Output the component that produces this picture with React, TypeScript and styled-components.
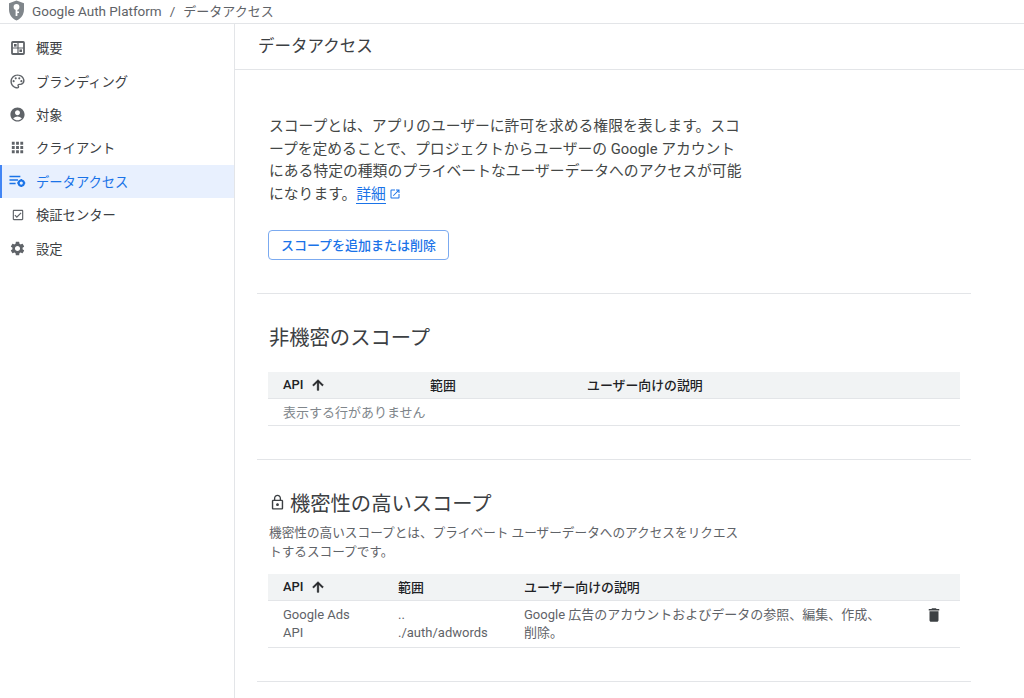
import React from "react";
import styled, { createGlobalStyle } from "styled-components";
import {
  MdAccountCircle,
  MdApps,
  MdArrowUpward,
  MdDelete,
  MdLockOutline,
  MdOpenInNew,
  MdOutlineCheckBox,
  MdOutlinePalette,
  MdSettings,
} from "react-icons/md";

const GlobalStyle = createGlobalStyle`
  html, body {
    margin: 0;
    padding: 0;
    height: 698px;
    overflow: hidden;
    background: #fff;
    font-family: Roboto, "Noto Sans CJK JP", sans-serif;
    color: #444746;
  }
  * { box-sizing: border-box; }
`;

const ShieldLogo = () => (
  <svg width="17" height="21" viewBox="0 0 17 21">
    <path d="M8.5 0.5 L16 3.2 V9.5 C16 14.6 13 18.6 8.5 20.5 C4 18.6 1 14.6 1 9.5 V3.2 Z" fill="#80868b" />
    <circle cx="8.5" cy="7" r="2.9" fill="#fff" />
    <path d="M7.6 9 H9.4 V16 H7.6 Z M9.4 11.6 H11 V13 H9.4 Z" fill="#fff" />
  </svg>
);

const OverviewIcon = () => (
  <svg width="14" height="14" viewBox="0 0 14 14" fill="none" stroke="#5f6368" strokeWidth="1.8">
    <rect x="1" y="1" width="12" height="12" rx="0.8" />
    <path d="M7 1.5 V12.5 M1.5 7 H12.5" strokeWidth="1.2" />
    <rect x="3" y="3" width="2.6" height="2.6" fill="#5f6368" stroke="none" />
    <rect x="8.4" y="8.4" width="2.6" height="2.6" fill="#5f6368" stroke="none" />
  </svg>
);

const DataAccessIcon = () => (
  <svg width="18" height="14" viewBox="0 0 18 14">
    <path d="M0.5 1.5 H12 V3 H0.5 Z M0.5 5.2 H9.5 V6.7 H0.5 Z M0.5 8.9 H7 V10.4 H0.5 Z" fill="#1a73e8" />
    <circle cx="13" cy="9.2" r="2.8" fill="none" stroke="#1a73e8" strokeWidth="2.2" />
    <path d="M13 5 V6.2 M13 12.2 V13.4 M8.8 9.2 H10 M16 9.2 H17.2" stroke="#1a73e8" strokeWidth="1.6" />
  </svg>
);

const navItems = [
  { label: "概要", icon: <OverviewIcon /> },
  { label: "ブランディング", icon: <MdOutlinePalette size={17} /> },
  { label: "対象", icon: <MdAccountCircle size={17} /> },
  { label: "クライアント", icon: <MdApps size={19} /> },
  { label: "データアクセス", icon: <DataAccessIcon />, active: true },
  { label: "検証センター", icon: <MdOutlineCheckBox size={14} /> },
  { label: "設定", icon: <MdSettings size={17} /> },
];

const App: React.FC = () => {
  return (
    <Page>
      <GlobalStyle />
      <TopBar>
        <ShieldLogo />
        <Product>Google Auth Platform</Product>
        <Slash>/</Slash>
        <Crumb>データアクセス</Crumb>
      </TopBar>
      <Body>
        <Sidebar>
          {navItems.map((item) => (
            <NavItem key={item.label} $active={!!item.active}>
              <NavIcon>{item.icon}</NavIcon>
              {item.label}
            </NavItem>
          ))}
        </Sidebar>
        <Main>
          <PageTitle>データアクセス</PageTitle>
          <Content>
            <Intro>
              スコープとは、アプリのユーザーに許可を求める権限を表します。スコープを定めることで、プロジェクトからユーザーの Google アカウントにある特定の種類のプライベートなユーザーデータへのアクセスが可能になります。
              <LearnMore>詳細</LearnMore>
              <ExternalIcon><MdOpenInNew size={12} /></ExternalIcon>
            </Intro>
            <OutlineButton>スコープを追加または削除</OutlineButton>
            <Divider $top={33} />

            <SectionTitle $top={29}>非機密のスコープ</SectionTitle>
            <Table $top={23}>
              <HeadRow $cols="147px 157px 1fr">
                <HeadCell>API <SortIcon><MdArrowUpward size={16} /></SortIcon></HeadCell>
                <HeadCell>範囲</HeadCell>
                <HeadCell>ユーザー向けの説明</HeadCell>
              </HeadRow>
              <EmptyRow>表示する行がありません</EmptyRow>
            </Table>
            <Divider $top={33} />

            <SectionTitle $top={29}>
              <LockIcon><MdLockOutline size={17} /></LockIcon>
              機密性の高いスコープ
            </SectionTitle>
            <SectionText>
              機密性の高いスコープとは、プライベート ユーザーデータへのアクセスをリクエストするスコープです。
            </SectionText>
            <Table $top={13}>
              <HeadRow $cols="115px 126px 403px 1fr">
                <HeadCell>API <SortIcon><MdArrowUpward size={16} /></SortIcon></HeadCell>
                <HeadCell>範囲</HeadCell>
                <HeadCell>ユーザー向けの説明</HeadCell>
                <span />
              </HeadRow>
              <DataRow $cols="115px 126px 403px 1fr">
                <DataCell>Google Ads API</DataCell>
                <DataCell>.. ./auth/adwords</DataCell>
                <DataCell>Google 広告のアカウントおよびデータの参照、編集、作成、削除。</DataCell>
                <TrashCell><MdDelete size={18} /></TrashCell>
              </DataRow>
            </Table>
            <Divider $top={33} />
          </Content>
        </Main>
      </Body>
    </Page>
  );
};

export default App;

const Page = styled.div`
  width: 1024px;
  height: 698px;
  display: flex;
  flex-direction: column;
  overflow: hidden;
`;

const TopBar = styled.header`
  height: 24px;
  flex-shrink: 0;
  display: flex;
  align-items: center;
  padding: 0 0 2px 8px;
  border-bottom: 1px solid #e3e5e8;
  font-size: 13.5px;
  color: #5f6368;
`;

const Product = styled.span`
  margin-left: 7px;
`;

const Slash = styled.span`
  margin: 0 8px;
`;

const Crumb = styled.span`
  font-size: 13px;
`;

const Body = styled.div`
  flex: 1;
  display: flex;
  min-height: 0;
`;

const Sidebar = styled.nav`
  width: 235px;
  flex-shrink: 0;
  padding-top: 7px;
  border-right: 1px solid #e3e5e8;
`;

const NavItem = styled.div<{ $active: boolean }>`
  height: 33.4px;
  display: flex;
  align-items: center;
  padding-left: ${(props) => (props.$active ? "7px" : "9px")};
  font-size: 13.3px;
  color: ${(props) => (props.$active ? "#1a73e8" : "#3c4043")};
  background: ${(props) => (props.$active ? "#e8f0fe" : "transparent")};
  border-left: ${(props) => (props.$active ? "2px solid #4285f4" : "none")};
`;

const NavIcon = styled.span`
  width: 17px;
  display: flex;
  align-items: center;
  justify-content: center;
  margin-right: 10px;
  color: #5f6368;
`;

const Main = styled.main`
  flex: 1;
  min-width: 0;
`;

const PageTitle = styled.h1`
  height: 46px;
  margin: 0;
  padding: 0 0 4px 23px;
  display: flex;
  align-items: center;
  font-size: 16.5px;
  font-weight: 400;
  color: #3c4043;
  border-bottom: 1px solid #e3e5e8;
`;

const Content = styled.div`
  width: 736px;
  padding: 45px 0 0 22px;
`;

const Intro = styled.p`
  width: 478px;
  margin: 0 0 0 12px;
  font-size: 14.8px;
  line-height: 22.7px;
  color: #444746;
`;

const LearnMore = styled.a`
  color: #1a73e8;
  border-bottom: 1px solid #1a73e8;
`;

const ExternalIcon = styled.span`
  margin-left: 3px;
  color: #1a73e8;
  vertical-align: -1px;
`;

const OutlineButton = styled.button`
  display: block;
  width: 181px;
  height: 30px;
  margin: 23px 0 0 11px;
  padding: 0;
  background: #fff;
  border: 1px solid #7baaf0;
  border-radius: 4px;
  font-family: inherit;
  font-size: 13px;
  font-weight: 500;
  color: #1a73e8;
`;

const Divider = styled.hr<{ $top: number }>`
  height: 1px;
  margin: ${(props) => props.$top}px 0 0;
  border: 0;
  background: #e3e5e8;
`;

const SectionTitle = styled.h2<{ $top: number }>`
  display: flex;
  align-items: center;
  height: 26px;
  margin: ${(props) => props.$top}px 0 0 12px;
  font-size: 20.3px;
  font-weight: 400;
  color: #3c4043;
`;

const LockIcon = styled.span`
  display: flex;
  margin: 2px 4px 0 0;
  color: #3c4043;
`;

const SectionText = styled.p`
  width: 473px;
  margin: 8px 0 0 12px;
  font-size: 12.65px;
  line-height: 19px;
  color: #5f6368;
`;

const Table = styled.div<{ $top: number }>`
  width: 692px;
  margin: ${(props) => props.$top}px 0 0 11px;
`;

const HeadRow = styled.div<{ $cols: string }>`
  height: 27px;
  display: grid;
  grid-template-columns: ${(props) => props.$cols};
  align-items: center;
  background: #f1f3f4;
  border-bottom: 1px solid #e3e5e8;
`;

const HeadCell = styled.div`
  display: flex;
  align-items: center;
  padding-left: 15px;
  font-size: 12.9px;
  font-weight: 500;
  color: #202124;

  svg path:last-child {
    stroke: currentColor;
    stroke-width: 1;
  }
`;

const SortIcon = styled.span`
  display: flex;
  margin-left: 7px;
  color: #202124;
`;

const EmptyRow = styled.div`
  height: 27px;
  display: flex;
  align-items: center;
  padding-left: 15px;
  font-size: 13px;
  color: #80868b;
  border-bottom: 1px solid #e3e5e8;
`;

const DataRow = styled.div<{ $cols: string }>`
  display: grid;
  grid-template-columns: ${(props) => props.$cols};
  padding: 5px 0 4px;
  border-bottom: 1px solid #e3e5e8;
`;

const DataCell = styled.div`
  padding: 0 24px 0 15px;
  font-size: 13px;
  line-height: 18.5px;
  color: #5f6368;
`;

const TrashCell = styled.div`
  padding: 0 0 0 13px;
  color: #3c4043;
`;
